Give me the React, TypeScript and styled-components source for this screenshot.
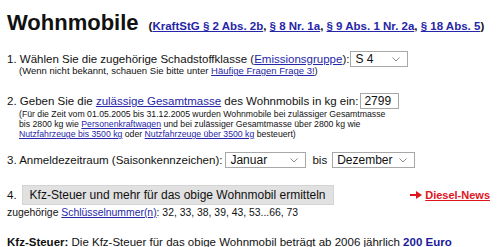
import React from "react";
import styled, { createGlobalStyle } from "styled-components";

const GlobalStyle = createGlobalStyle`
  html, body {
    margin: 0;
    padding: 0;
    background: #fff;
  }
  body {
    font-family: "Liberation Sans", Arial, sans-serif;
    color: #111;
  }
`;

const Page = styled.div`
  width: 500px;
  height: 247px;
  overflow: hidden;
  padding: 10px 7px 0;
  box-sizing: border-box;
  font-size: 11.5px;
`;

const Header = styled.div`
  display: flex;
  align-items: baseline;
  gap: 10px;
`;

const Title = styled.h1`
  margin: 0;
  font-size: 22px;
  line-height: 26px;
  font-weight: bold;
  color: #111;
`;

const LawLinks = styled.span`
  font-size: 11.5px;
  font-weight: bold;
  color: #111;
`;

const Link = styled.a<{ $bold?: boolean }>`
  color: #2626a8;
  text-decoration: underline;
  font-weight: ${(p) => (p.$bold ? "bold" : "normal")};
  cursor: pointer;
`;

const Row = styled.div<{ $mt: number; $size?: number }>`
  height: 15px;
  line-height: 15px;
  margin-top: ${(p) => p.$mt}px;
  font-size: ${(p) => p.$size ?? 11.5}px;
  white-space: nowrap;
`;

const Note = styled.div<{ $mt?: number; $size: number }>`
  font-size: ${(p) => p.$size}px;
  line-height: 10px;
  padding-left: 12px;
  margin-top: ${(p) => p.$mt ?? 0}px;
  white-space: nowrap;
`;

const SelectBox = styled.span<{ $w: number; $ml: number }>`
  position: relative;
  display: inline-block;
  vertical-align: middle;
  box-sizing: border-box;
  width: ${(p) => p.$w}px;
  height: 16px;
  margin-left: ${(p) => p.$ml}px;
  margin-top: -2px;
  padding-left: 4px;
  border: 1px solid #a8a8a8;
  background: #fff;
  font-size: 12px;
  line-height: 14px;

  svg {
    position: absolute;
    right: 7px;
    top: 5px;
  }
`;

const TextInput = styled.span`
  display: inline-block;
  vertical-align: middle;
  box-sizing: border-box;
  width: 39px;
  height: 16px;
  margin-left: 2px;
  margin-top: -2px;
  padding-left: 3px;
  border: 1px solid #a8a8a8;
  line-height: 14px;
  font-size: 12px;
`;

const Between = styled.span`
  margin-left: 6px;
`;

const ActionRow = styled.div`
  display: flex;
  align-items: center;
  margin-top: 17px;
  height: 20px;
`;

const SubmitButton = styled.button`
  height: 20px;
  margin-left: 5px;
  padding: 0 7px;
  border: 1px solid #d4d4d4;
  background: #e1e1e1;
  font-family: "Liberation Sans", Arial, sans-serif;
  font-size: 12px;
  color: #111;
`;

const NewsLink = styled.a`
  margin-left: auto;
  margin-right: 3px;
  display: flex;
  align-items: center;
  gap: 3px;
  color: #e0141e;
  font-size: 11px;
  font-weight: bold;
  text-decoration: underline;
`;

const Result = styled.div`
  margin-top: 15px;
  line-height: 15px;
  white-space: nowrap;
`;

const Amount = styled.b`
  color: #1a1a9a;
`;

const Chevron = () => (
  <svg width="8" height="5" viewBox="0 0 8 5">
    <path d="M0.5 0.5 L4 4 L7.5 0.5" fill="none" stroke="#8a8a8a" strokeWidth="1" />
  </svg>
);

const Select: React.FC<{ value: string; width: number; ml: number }> = ({ value, width, ml }) => (
  <SelectBox $w={width} $ml={ml}>
    {value}
    <Chevron />
  </SelectBox>
);

const RedArrow = () => (
  <svg width="12" height="8" viewBox="0 0 12 8">
    <rect x="0" y="3" width="7" height="2" fill="#e0141e" />
    <path d="M6 0 L12 4 L6 8 Z" fill="#e0141e" />
  </svg>
);

const App: React.FC = () => {
  return (
    <Page>
      <GlobalStyle />
      <Header>
        <Title>Wohnmobile</Title>
        <LawLinks>
          (<Link $bold>KraftStG § 2 Abs. 2b</Link>, <Link $bold>§ 8 Nr. 1a</Link>,{" "}
          <Link $bold>§ 9 Abs. 1 Nr. 2a</Link>, <Link $bold>§ 18 Abs. 5</Link>)
        </LawLinks>
      </Header>

      <Row $mt={16}>
        1. Wählen Sie die zugehörige Schadstoffklasse (<Link>Emissionsgruppe</Link>):
        <Select value="S 4" width={58} ml={1} />
      </Row>
      <Note $mt={-1} $size={9.5}>
        (Wenn nicht bekannt, schauen Sie bitte unter <Link>Häufige Fragen Frage 3!</Link>)
      </Note>

      <Row $mt={18}>
        2. Geben Sie die <Link>zulässige Gesamtmasse</Link> des Wohnmobils in kg ein:
        <TextInput>2799</TextInput>
      </Row>
      <Note $size={8.7}>
        (Für die Zeit vom 01.05.2005 bis 31.12.2005 wurden Wohnmobile bei zulässiger Gesamtmasse
        <br />
        bis 2800 kg wie <Link>Personenkraftwagen</Link> und bei zulässiger Gesamtmasse über 2800 kg wie
        <br />
        <Link>Nutzfahrzeuge bis 3500 kg</Link> oder <Link>Nutzfahrzeuge über 3500 kg</Link> besteuert)
      </Note>

      <Row $mt={14}>
        3. Anmeldezeitraum (Saisonkennzeichen):
        <Select value="Januar" width={81} ml={3} />
        <Between>bis</Between>
        <Select value="Dezember" width={83} ml={5} />
      </Row>

      <ActionRow>
        4.
        <SubmitButton type="button">
          Kfz-Steuer und mehr für das obige Wohnmobil ermitteln
        </SubmitButton>
        <NewsLink>
          <RedArrow />
          <span>Diesel-News</span>
        </NewsLink>
      </ActionRow>
      <Row $mt={0} $size={10.4}>
        zugehörige <Link>Schlüsselnummer(n)</Link>: 32, 33, 38, 39, 43, 53...66, 73
      </Row>

      <Result>
        <b>Kfz-Steuer:</b> Die Kfz-Steuer für das obige Wohnmobil beträgt ab 2006 jährlich{" "}
        <Amount>200 Euro</Amount>
      </Result>
    </Page>
  );
};

export default App;
